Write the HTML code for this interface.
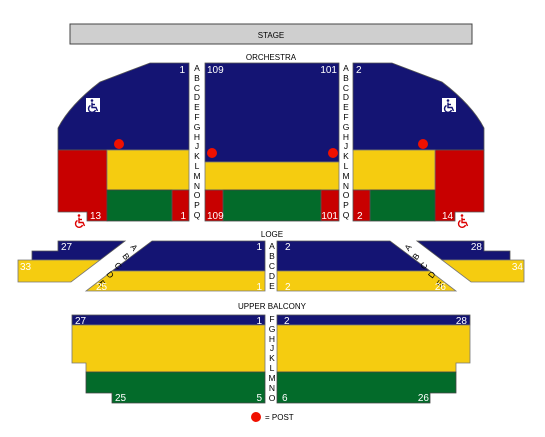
<!DOCTYPE html>
<html><head><meta charset="utf-8"><style>
html,body{margin:0;padding:0;background:#fff;}
svg{display:block;font-family:"Liberation Sans",Arial,sans-serif;}
.b{fill:#141473;stroke:#555;stroke-width:.8}
.y{fill:#f5cc10;stroke:#777;stroke-width:.8}
.g{fill:#036b2a;stroke:#444;stroke-width:.8}
.r{fill:#c80000;stroke:#555;stroke-width:.8}
.w{fill:#fff;font-size:10px}
.k{fill:#000;font-size:8.5px}
.l{fill:#000;font-size:8px}
</style></head><body>
<svg width="545" height="437" viewBox="0 0 545 437">
<defs>
<g id="wc" fill="none" stroke-width="1.4">
<circle cx="5" cy="1.5" r="1.3" stroke="none" fill="currentColor"/>
<path d="M5,3.5 L5,8.5 L9,8.5 L10.5,12" stroke="currentColor"/>
<path d="M5,5.5 L8,5.5" stroke="currentColor"/>
<path d="M3.5,6.5 A3.6,3.6 0 1 0 8.5,11" stroke="currentColor"/>
</g>
</defs>
<rect x="70" y="24" width="402" height="20" fill="#cfcfcf" stroke="#444" stroke-width="1"/>
<text x="271" y="38" text-anchor="middle" class="l" font-size="9">STAGE</text>
<text x="271" y="60" text-anchor="middle" class="l">ORCHESTRA</text>

<g id="orchL">
<path class="b" d="M150,63 L189,63 L189,150 L58,150 L58,128 Q70,105 100,82 Z"/>
<path class="r" d="M58,150 L107,150 L107,221 L87,221 L87,212 L58,212 Z"/>
<rect class="y" x="107" y="150" width="82" height="40"/>
<rect class="g" x="107" y="190" width="65" height="31"/>
<rect class="r" x="172" y="190" width="17" height="31"/>
<circle cx="119" cy="144" r="5" fill="#f01000"/>
<rect x="86" y="98" width="14" height="14" fill="#fff"/>
</g>
<use href="#orchL" transform="translate(542,0) scale(-1,1)"/>
<rect class="b" x="205" y="63" width="134" height="99"/>
<rect class="y" x="205" y="162" width="134" height="28"/>
<rect class="g" x="223" y="190" width="98" height="31"/>
<rect class="r" x="205" y="190" width="18" height="31"/>
<rect class="r" x="321" y="190" width="18" height="31"/>
<circle cx="212" cy="153" r="5" fill="#f01000"/>
<circle cx="333" cy="153" r="5" fill="#f01000"/>
<use href="#wc" x="87" y="99" style="color:#141473"/>
<use href="#wc" x="443" y="99" style="color:#141473"/>
<use href="#wc" x="74" y="214" style="color:#d00"/>
<use href="#wc" x="457" y="214" style="color:#d00"/>

<text class="w" x="185" y="73" text-anchor="end">1</text>
<text class="w" x="207" y="73">109</text>
<text class="w" x="337" y="73" text-anchor="end">101</text>
<text class="w" x="356" y="73">2</text>
<text class="w" x="90" y="219">13</text>
<text class="w" x="186" y="219" text-anchor="end">1</text>
<text class="w" x="207" y="219">109</text>
<text class="w" x="338" y="219" text-anchor="end">101</text>
<text class="w" x="357" y="219">2</text>
<text class="w" x="442" y="219">14</text>

<g class="k" text-anchor="middle">
<text x="197" y="71">A</text><text x="197" y="81">B</text><text x="197" y="91">C</text><text x="197" y="100">D</text><text x="197" y="110">E</text><text x="197" y="120">F</text><text x="197" y="130">G</text><text x="197" y="140">H</text><text x="197" y="149">J</text><text x="197" y="159">K</text><text x="197" y="169">L</text><text x="197" y="179">M</text><text x="197" y="189">N</text><text x="197" y="198">O</text><text x="197" y="208">P</text><text x="197" y="218">Q</text>
<text x="346" y="71">A</text><text x="346" y="81">B</text><text x="346" y="91">C</text><text x="346" y="100">D</text><text x="346" y="110">E</text><text x="346" y="120">F</text><text x="346" y="130">G</text><text x="346" y="140">H</text><text x="346" y="149">J</text><text x="346" y="159">K</text><text x="346" y="169">L</text><text x="346" y="179">M</text><text x="346" y="189">N</text><text x="346" y="198">O</text><text x="346" y="208">P</text><text x="346" y="218">Q</text>
</g>

<text x="272" y="237" text-anchor="middle" class="l">LOGE</text>
<g id="logeL">
<path class="b" d="M58,241 L125,241 L100,260 L32,260 L32,251 L58,251 Z"/>
<path class="y" d="M18,260 L100,260 L71,282 L18,282 Z"/>
<path class="b" d="M152,241 L265,241 L265,271 L112,271 Z"/>
<path class="y" d="M112,271 L265,271 L265,291 L86,291 Z"/>
</g>
<use href="#logeL" transform="translate(542,0) scale(-1,1)"/>
<g class="k" font-size="8">
<text transform="translate(130,247) rotate(53)">A</text>
<text transform="translate(122,256) rotate(53)">B</text>
<text transform="translate(114,265) rotate(53)">C</text>
<text transform="translate(106,274) rotate(53)">D</text>
<text transform="translate(98,283) rotate(53)">E</text>
<text transform="translate(412,247) rotate(-53)" text-anchor="end">A</text>
<text transform="translate(420,256) rotate(-53)" text-anchor="end">B</text>
<text transform="translate(428,265) rotate(-53)" text-anchor="end">C</text>
<text transform="translate(436,274) rotate(-53)" text-anchor="end">D</text>
<text transform="translate(444,283) rotate(-53)" text-anchor="end">E</text>
</g>
<text class="w" x="61" y="250">27</text>
<text class="w" x="20" y="270">33</text>
<text class="w" x="262" y="250" text-anchor="end">1</text>
<text class="w" x="96" y="290">25</text>
<text class="w" x="262" y="290" text-anchor="end">1</text>
<text class="w" x="285" y="250">2</text>
<text class="w" x="482" y="250" text-anchor="end">28</text>
<text class="w" x="523" y="270" text-anchor="end">34</text>
<text class="w" x="285" y="290">2</text>
<text class="w" x="446" y="290" text-anchor="end">26</text>
<g class="k" text-anchor="middle">
<text x="272" y="249">A</text><text x="272" y="259">B</text><text x="272" y="269">C</text><text x="272" y="279">D</text><text x="272" y="289">E</text>
</g>

<text x="272" y="309" text-anchor="middle" class="l">UPPER BALCONY</text>
<g id="balL">
<rect class="b" x="72" y="315" width="193" height="10"/>
<path class="y" d="M72,325 L265,325 L265,372 L86,372 L86,363 L72,363 Z"/>
<path class="g" d="M86,372 L265,372 L265,403 L112,403 L112,393 L86,393 Z"/>
</g>
<use href="#balL" transform="translate(542,0) scale(-1,1)"/>
<text class="w" x="75" y="324">27</text>
<text class="w" x="262" y="324" text-anchor="end">1</text>
<text class="w" x="115" y="401">25</text>
<text class="w" x="262" y="401" text-anchor="end">5</text>
<text class="w" x="284" y="324">2</text>
<text class="w" x="467" y="324" text-anchor="end">28</text>
<text class="w" x="282" y="401">6</text>
<text class="w" x="429" y="401" text-anchor="end">26</text>
<g class="k" text-anchor="middle">
<text x="272" y="322">F</text><text x="272" y="332">G</text><text x="272" y="342">H</text><text x="272" y="351">J</text><text x="272" y="361">K</text><text x="272" y="371">L</text><text x="272" y="381">M</text><text x="272" y="391">N</text><text x="272" y="401">O</text>
</g>
<circle cx="256" cy="417" r="5" fill="#f01000"/>
<text x="265" y="420" class="l">= POST</text>
</svg>
</body></html>
